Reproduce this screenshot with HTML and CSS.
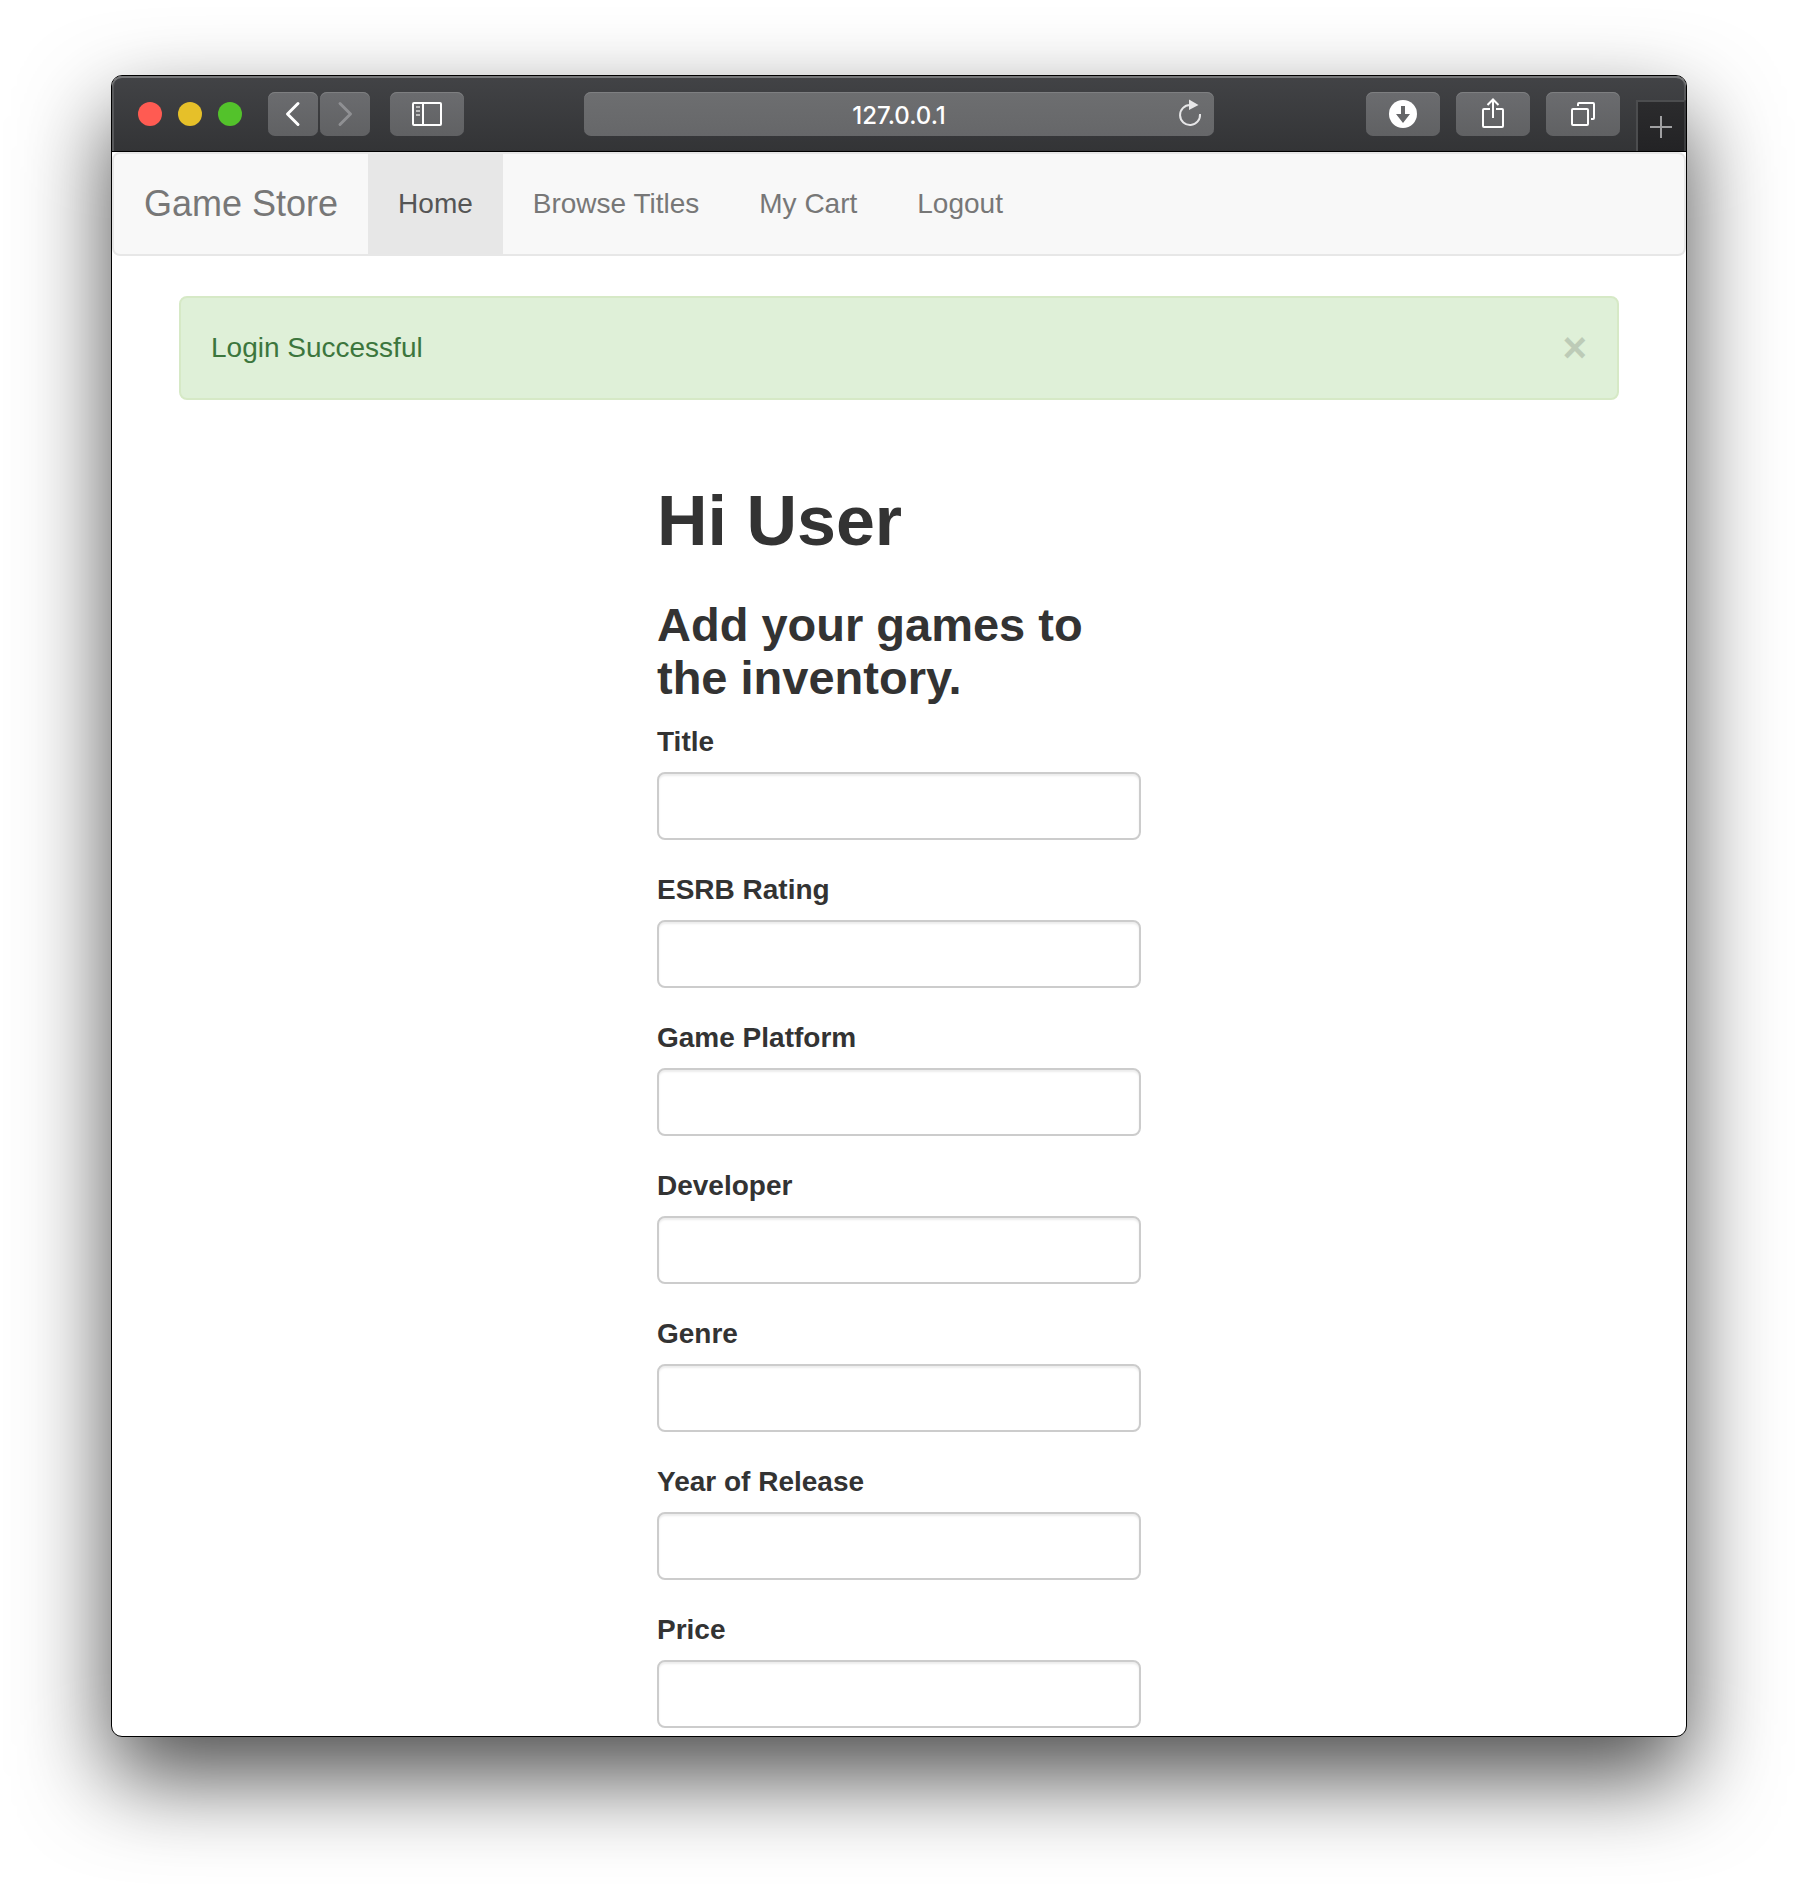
FILE: index.html
```html
<!DOCTYPE html>
<html lang="en">
<head>
<meta charset="utf-8">
<title>Game Store</title>
<link rel="stylesheet" href="styles.css">
</head>
<body>
<div class="window">
  <header class="toolbar">
    <div class="toolbar-left">
      <div class="lights">
        <span class="light light-close"></span>
        <span class="light light-min"></span>
        <span class="light light-max"></span>
      </div>
      <div class="history">
        <button class="tool tool-narrow" type="button" aria-label="Back"><svg width="50" height="44" fill="none" stroke="#fff" stroke-width="3" stroke-linecap="round" stroke-linejoin="round"><path d="M30 11.500L19.500 22L30 32.500"/></svg></button>
        <button class="tool tool-narrow" type="button" aria-label="Forward"><svg width="50" height="44" fill="none" stroke="#8f9093" stroke-width="3" stroke-linecap="round" stroke-linejoin="round"><path d="M20 11.500L30.500 22L20 32.500"/></svg></button>
      </div>
      <button class="tool" type="button" aria-label="Sidebar"><svg width="74" height="44" fill="none" stroke="#fff" stroke-width="2"><rect x="23" y="11" width="28" height="22" rx="1"/><path d="M33 11V33"/><path d="M26 15H30M26 19H30M26 23H30" stroke="#bbb"/></svg></button>
    </div>
    <div class="address">
      <span class="address-text">127.0.0.1</span>
      <button class="reload" type="button" aria-label="Reload"><svg width="32" height="32"><path d="M16 7A10 10 0 1 0 26 16" fill="none" stroke="#e6e6e7" stroke-width="2"/><path d="M15 1.500L24.500 7L15 12Z" fill="#e6e6e7"/></svg></button>
    </div>
    <div class="toolbar-right">
      <button class="tool" type="button" aria-label="Downloads"><svg width="74" height="44"><circle cx="37" cy="22" r="14" fill="#fff"/><path d="M35 14H39V22H44L37 31L30 22H35Z" fill="#656668"/></svg></button>
      <button class="tool" type="button" aria-label="Share"><svg width="74" height="44" fill="none" stroke="#fff" stroke-width="2"><path d="M34 17H28Q27 17 27 18V34Q27 35 28 35H46Q47 35 47 34V18Q47 17 46 17H40"/><path d="M37 26V8M31.500 13L37 7.500L42.500 13"/></svg></button>
      <button class="tool" type="button" aria-label="Tabs"><svg width="74" height="44" fill="none" stroke="#fff" stroke-width="2"><rect x="26" y="17" width="16" height="16" rx="1"/><path d="M32 14V12Q32 11 33 11H47Q48 11 48 12V26Q48 27 47 27H45"/></svg></button>
      <button class="new-tab" type="button" aria-label="New tab"><svg width="22" height="22" stroke="#a0a0a2" stroke-width="2"><path d="M11 0V22M0 11H22"/></svg></button>
    </div>
  </header>
  <nav class="navbar">
    <a class="brand" href="#">Game Store</a>
    <a class="nav-link active" href="#">Home</a>
    <a class="nav-link" href="#">Browse Titles</a>
    <a class="nav-link" href="#">My Cart</a>
    <a class="nav-link" href="#">Logout</a>
  </nav>
  <main class="container">
    <div class="alert" role="alert">
      <span>Login Successful</span>
      <button class="close" type="button" aria-label="Close">×</button>
    </div>
    <form class="game-form">
      <h1>Hi User</h1>
      <h3>Add your games to the inventory.</h3>
      <div class="group"><label for="title">Title</label><input id="title" type="text"></div>
      <div class="group"><label for="rating">ESRB Rating</label><input id="rating" type="text"></div>
      <div class="group"><label for="platform">Game Platform</label><input id="platform" type="text"></div>
      <div class="group"><label for="developer">Developer</label><input id="developer" type="text"></div>
      <div class="group"><label for="genre">Genre</label><input id="genre" type="text"></div>
      <div class="group"><label for="year">Year of Release</label><input id="year" type="text"></div>
      <div class="group"><label for="price">Price</label><input id="price" type="text"></div>
    </form>
  </main>
</div>
</body>
</html>
```
FILE: styles.css
```css
* {
  box-sizing: border-box;
}

body {
  margin: 0;
  padding: 75px 111px 147px;
  background: #fff;
  color: #333;
  font: 28px/40px "Liberation Sans", Arial, sans-serif;
}

button {
  margin: 0;
  padding: 0;
  border: 0;
  font: inherit;
}

svg {
  display: block;
}

.window {
  overflow: hidden;
  border: 1px solid #000;
  border-radius: 11px;
  background: #fff;
  box-shadow: 0 40px 90px rgba(0, 0, 0, 0.7);
}

/* Browser toolbar */
.toolbar {
  display: grid;
  grid-template-columns: 1fr 40% 1fr;
  height: 76px;
  border-bottom: 1px solid #000;
  border-radius: 10px 10px 0 0;
  background: linear-gradient(#424346, #333436);
  box-shadow: inset 0 2px #77787a, inset 2px 0 #57585a, inset -2px 0 #57585a;
}

.toolbar-left,
.toolbar-right {
  display: flex;
  align-items: flex-start;
  padding-top: 16px;
}

.toolbar-left {
  gap: 20px;
  padding-left: 26px;
}

.toolbar-right {
  justify-content: flex-end;
  gap: 16px;
}

.lights {
  display: flex;
  gap: 16px;
  margin-right: 6px;
  padding-top: 10px;
}

.light {
  width: 24px;
  height: 24px;
  border-radius: 50%;
}

.light-close {
  background: #ff5b52;
}

.light-min {
  background: #e6c029;
}

.light-max {
  background: #53c22b;
}

.history {
  display: flex;
  gap: 2px;
}

.tool,
.address {
  height: 44px;
  border-radius: 7px;
  background: linear-gradient(#6b6c6f, #606163);
  box-shadow: inset 0 1px #7e7f81;
}

.tool {
  width: 74px;
}

.tool-narrow {
  width: 50px;
}

.address {
  display: grid;
  grid-template-columns: 40px 1fr 40px;
  align-items: center;
  margin-top: 16px;
  background: linear-gradient(#6d6e70, #666769);
}

.address-text {
  grid-column: 2;
  padding-top: 3px;
  color: #fff;
  font: 500 24px/41px Inter, sans-serif;
  text-align: center;
}

.reload {
  background: none;
}

.new-tab {
  display: flex;
  align-items: center;
  justify-content: center;
  width: 50px;
  height: 51px;
  margin-top: 8px;
  border-top: 2px solid #4c4d4f;
  border-left: 2px solid #4c4d4f;
  border-right: 2px solid #3c3d3f;
  background: linear-gradient(#2b2b2d, #232325);
}

/* Site navigation */
.navbar {
  display: flex;
  border: 2px solid #e7e7e7;
  border-radius: 8px;
  background: #f8f8f8;
}

.brand,
.nav-link {
  padding: 30px;
  color: #777;
  text-decoration: none;
}

.brand {
  font-size: 36px;
}

.nav-link.active {
  background: #e7e7e7;
  color: #555;
}

/* Page content */
.container {
  max-width: 1500px;
  margin: 0 auto;
  padding: 40px 30px 8px;
}

.alert {
  display: flex;
  align-items: center;
  justify-content: space-between;
  padding: 30px;
  border: 2px solid #d6e9c6;
  border-radius: 8px;
  background: #dff0d8;
  color: #3c763d;
}

.close {
  background: none;
  color: #000;
  font-size: 42px;
  font-weight: bold;
  line-height: 40px;
  opacity: 0.15;
}

.game-form {
  max-width: 484px;
  margin: 82px auto 0;
}

h1,
h3 {
  margin: 0;
  font-weight: bold;
}

h1 {
  margin-bottom: 38px;
  font-size: 70px;
  line-height: 78px;
}

h3 {
  margin-bottom: 18px;
  font-size: 47px;
  line-height: 53px;
}

.group + .group {
  margin-top: 30px;
}

label {
  display: block;
  margin-bottom: 10px;
  font-weight: bold;
}

input {
  display: block;
  width: 100%;
  height: 68px;
  padding: 12px 24px;
  border: 2px solid #ccc;
  border-radius: 8px;
  background: #fff;
  box-shadow: inset 0 2px 2px rgba(0, 0, 0, 0.075);
  font: inherit;
}
```
